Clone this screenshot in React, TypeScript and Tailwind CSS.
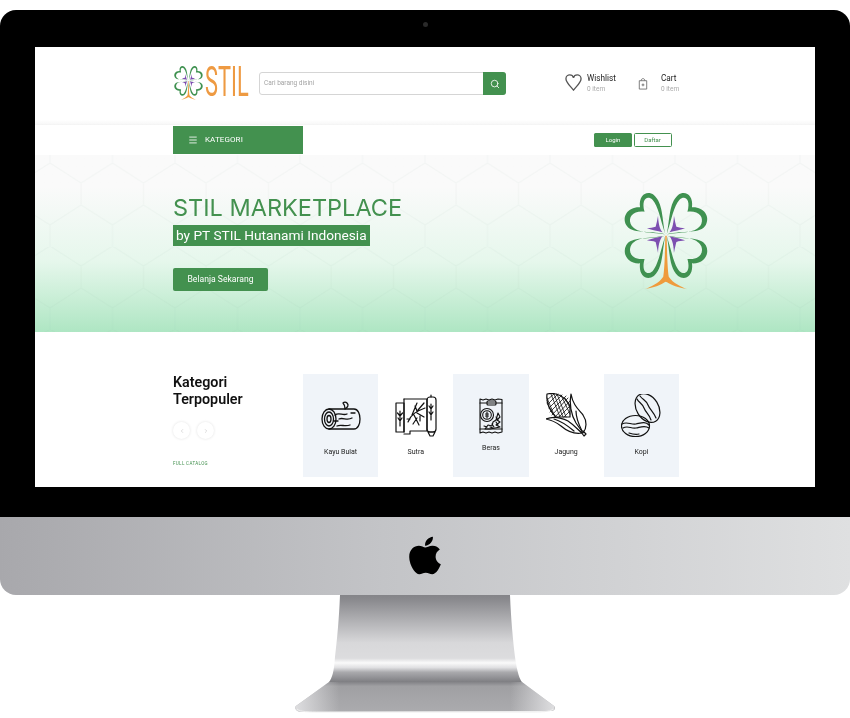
import React from "react";
import { FaApple } from "react-icons/fa";
import { Search, Menu, ChevronLeft, ChevronRight } from "lucide-react";

const Heart = ({ t }: { t: string }) => (
  <path
    transform={t}
    fill="#3f9150"
    d="M198 178 C188 130 192 85 165 60 C145 45 120 60 125 97 C90 95 72 125 85 150 C100 178 150 165 198 178 C150 170 112 176 98 147 C90 125 106 106 138 110 C128 73 145 60 161 74 C178 94 183 130 198 178Z"
  />
);
const Star = ({ t }: { t: string }) => (
  <path
    transform={t}
    fill="#7d4fb0"
    d="M190 172 C180 160 178 140 177 122 C174 138 172 148 170 155 C162 158 155 158 145 160 C160 165 175 168 190 172Z"
  />
);

const Clover = ({ className }: { className: string }) => (
  <svg viewBox="70 45 260 300" preserveAspectRatio="none" className={className}>
    <Heart t="" />
    <Heart t="translate(400 0) scale(-1 1)" />
    <Heart t="translate(0 356) scale(1 -1) translate(0 -8) scale(1 1.02)" />
    <Heart t="translate(400 356) scale(-1 -1) translate(0 -8) scale(1 1.02)" />
    <Star t="" />
    <Star t="translate(400 0) scale(-1 1)" />
    <Star t="translate(0 356) scale(1 -1)" />
    <Star t="translate(400 356) scale(-1 -1)" />
    <path
      fill="#ef9b3c"
      d="M198 182 L202 182 C203 230 204 280 208 305 C220 325 245 335 262 343 C235 338 215 330 203 322 C200 320 199 320 196 322 C185 330 165 338 138 343 C155 335 180 325 192 305 C196 280 197 230 198 182Z"
    />
  </svg>
);

const LogIcon = () => (
  <svg viewBox="0 0 40 30" className="h-[30px] w-[40px]" fill="none" stroke="#111" strokeWidth="1.3" strokeLinecap="round" strokeLinejoin="round">
    <ellipse cx="8" cy="18" rx="7" ry="10" />
    <ellipse cx="8" cy="18" rx="4.5" ry="7" />
    <ellipse cx="8" cy="18" rx="2" ry="3.5" />
    <path d="M8 8 H33 C41 8 41 28 33 28 H8" />
    <path d="M14 14 C18 11 22 15 26 13 M18 18 C22 16 26 20 31 17 M16 25 C20 23 24 26 29 24 M13 20 H17 M30 12 H34" />
    <path d="M24 8 C24 5 24 4 22 2 M24 8 C27 6 28 4 26 2 C25 1 23 1 22 2" />
  </svg>
);
const SutraIcon = () => (
  <svg viewBox="0 0 42 44" className="h-[44px] w-[42px]" fill="none" stroke="#111" strokeWidth="1.2" strokeLinecap="round" strokeLinejoin="round">
    <path d="M1 9 H9 V38 H1 Z" />
    <path d="M9 5 H32 V37 H15 V40 H9" />
    <path d="M9 5 V38" />
    <rect x="32" y="3" width="9" height="35" rx="3" />
    <path d="M36 1 V3 M33 38 H40 L38 42 H35 Z" />
    <path d="M5 17 V32 M5 22 L2.5 19 M5 22 L7.5 19 M5 27 L3 24 M5 27 L7 24" />
    <path d="M36 10 V26 M36 15 L34 12 M36 15 L38 12 M36 21 L34 18 M36 21 L38 18" />
    <path d="M13 28 C16 20 22 17 30 14 M17 21 L22 9 M22 17 L20 12 M23 16 L29 9 M22 19 L29 23 M19 21 L24 31 M22 24 L18 30 M15 25 H12 M25 22 L25 27" />
  </svg>
);
const RiceIcon = () => (
  <svg viewBox="0 0 26 36" className="h-[36px] w-[26px]" fill="none" stroke="#111" strokeWidth="1.1" strokeLinecap="round" strokeLinejoin="round">
    <path d="M2 1 L5 2 L8 1 L11 2 L14 1 L17 2 L20 1 L24 1.5 V34 L20 35 L17 34 L14 35 L11 34 L8 35 L5 34 L2 35 Z" />
    <path d="M2 5 H24 M2 31 H24" strokeWidth="1.2" />
    <rect x="9" y="3" width="9" height="4" rx="1" />
    <circle cx="9" cy="17" r="6.5" />
    <circle cx="9" cy="17" r="4.3" />
    <path d="M9 14 V20 M7.5 16 H10.5 M7.5 18 H10.5" />
    <path d="M20 15 L22 19 L19 22 L22 24 L18 27 L22 29 L12 31 L7 31 L10 27 L14 28 L15 24 L18 22 Z" />
    <path d="M6 28 L9 29 M14 26 L16 29 M18 24 L20 27 M18 19 L20 22 M12 29 L15 30" />
  </svg>
);
const CornIcon = () => (
  <svg viewBox="0 0 41 44" className="h-[44px] w-[41px]" fill="none" stroke="#111" strokeWidth="1.2" strokeLinecap="round" strokeLinejoin="round">
    <path d="M1 1 C10 -1 19 3 24 13 L24 24 L10 24 C4 18 0 10 1 1 Z" />
    <path
      d="M5 1 L14 24 M8 1 L17 24 M11 1 L20 24 M15 2 L24 21 M19 5 L24 15 M1 5 L9 24 M1 10 L7 21 M24 8 L9 24 M22 5 L6 22 M20 3 L4 19 M16 2 L3 15 M12 1 L2 11 M8 1 L1 7 M24 13 L13 24 M24 18 L18 24"
      strokeWidth="0.8"
    />
    <path d="M0 26 C7 23 14 24 22 28 C28 32 32 37 36 40 C30 41 22 39 15 33 C11 30 6 27 0 26 Z" />
    <path d="M8 26 C15 28 22 33 28 38" />
    <path d="M25 1 C23 10 25 22 30 30 C34 36 36 38 37 40 C41 35 41 28 37 22 C32 16 27 12 25 1 Z" />
    <path d="M30 18 C30 25 33 32 36 38 M35 39 L38 43 L40 41 L37 38" />
  </svg>
);
const CoffeeIcon = () => (
  <svg viewBox="0 0 41 44" className="h-[44px] w-[41px]" fill="none" stroke="#111" strokeWidth="1.2" strokeLinecap="round" strokeLinejoin="round">
    <ellipse cx="26.5" cy="14" rx="11" ry="15.5" transform="rotate(-32 26.5 14)" />
    <path d="M19 2 C22 6 25 6 27 11 C29 16 32 17 35 24 M16 5 C18 9 21 9 23 14 C25 19 28 20 30 26" />
    <ellipse cx="14.5" cy="32" rx="14" ry="10.5" />
    <path d="M1 30 C6 27 10 31 15 30 C20 29 24 27 28 31 M2 34 C7 31 10 35 15 34 C20 33 24 31 28 34" />
    <path d="M8 39 C11 40 14 41 18 40" />
  </svg>
);

const cats = [
  { name: "Kayu Bulat", shaded: true, icon: <LogIcon />, box: "pt-[27px]", label: "mt-[16px]" },
  { name: "Sutra", shaded: false, icon: <SutraIcon />, box: "pt-[20px]", label: "mt-[9px]" },
  { name: "Beras", shaded: true, icon: <RiceIcon />, box: "pt-[24px]", label: "mt-[9px]" },
  { name: "Jagung", shaded: false, icon: <CornIcon />, box: "pt-[19px]", label: "mt-[10px]" },
  { name: "Kopi", shaded: true, icon: <CoffeeIcon />, box: "pt-[20px]", label: "mt-[9px]" },
];

const Category = ({ c }: { c: (typeof cats)[number] }) => (
  <div className={`flex h-[103px] w-[75.2px] flex-col items-center ${c.box} ${c.shaded ? "bg-[#f0f4f9]" : "bg-white"}`}>
    {c.icon}
    <div className={`text-[7px] leading-[10px] text-[#222] ${c.label}`}>{c.name}</div>
  </div>
);

const HexPattern = () => (
  <svg className="absolute inset-0 h-full w-full" fill="none">
    <defs>
      <pattern id="hex" width="62.5" height="83" patternUnits="userSpaceOnUse" x="15" y="8">
        <path d="M0 0 L31 20 L62.5 0 M31 20 V42 M31 42 L0 62 M31 42 L62.5 62 M0 62 V83 M62.5 62 V83" stroke="#7fa893" strokeOpacity="0.05" strokeWidth="1.2" />
      </pattern>
    </defs>
    <rect width="100%" height="100%" fill="url(#hex)" />
  </svg>
);

export default function App() {
  return (
    <div className="flex h-[718px] w-[850px] flex-col overflow-hidden bg-white pt-[10px] font-['Roboto',sans-serif]">
      {/* bezel */}
      <div className="flex flex-col items-center rounded-t-[16px] bg-black px-[35px] pb-[30px] pt-[12px]">
        <div className="mb-[20px] h-[5px] w-[5px] rounded-full bg-[#2a2a2a]" />
        <div className="h-[440px] w-[780px] overflow-hidden bg-white blur-[0.35px]">
          {/* header */}
          <div className="flex h-[73px] bg-white pl-[138px] pt-[18px]">
            <div className="flex h-[35px] w-[86px] shrink-0 items-start">
              <Clover className="h-[35px] w-[31px] shrink-0" />
              <span className="ml-[1px] mt-[-8px] origin-left scale-x-[0.52] text-[42px] leading-[50px] font-normal text-[#ee9a42]">STIL</span>
            </div>
            <div className="mt-[7px] flex h-[23px] w-[247px] rounded-[3px] border border-[#d5d5d5] bg-white">
              <div className="flex-1 pl-[4px] text-[6.5px] leading-[21px] text-[#a3a3a3]">Cari barang disini</div>
              <div className="m-[-1px] flex h-[23px] w-[23px] items-center justify-center rounded-r-[3px] bg-[#43914f]">
                <Search className="h-[10px] w-[10px] text-white" strokeWidth={2} />
              </div>
            </div>
            <div className="ml-[59px] mt-[7px] flex">
              <svg viewBox="0 0 18 18" className="mr-[5px] mt-[2px] h-[17px] w-[17px]" fill="none" stroke="#555" strokeWidth="1.4">
                <path d="M9 17 C5 12 1 9 1 5 C1 2 3.5 1 5 1 C7 1 8.5 2 9 4 C9.5 2 11 1 13 1 C15 1 17 2.5 17 5 C17 9 13 12 9 17 Z" />
              </svg>
              <div className="w-[30px]">
                <div className="text-[8.2px] leading-[12px] text-[#222]">Wishlist</div>
                <div className="text-[6.5px] leading-[10px] text-[#aaa]">0 item</div>
              </div>
              <svg viewBox="0 0 10 14" className="ml-[21px] mr-[13px] mt-[5px] h-[13px] w-[10px]" fill="none" stroke="#666" strokeWidth="0.9">
                <path d="M1 4 H9 V13 H1 Z M3 4 C3 1 7 1 7 4 M5 7 V10 M3.5 8.5 H6.5" />
              </svg>
              <div>
                <div className="text-[8.2px] leading-[12px] text-[#222]">Cart</div>
                <div className="text-[6.5px] leading-[10px] text-[#aaa]">0 item</div>
              </div>
            </div>
          </div>
          {/* nav */}
          <div className="h-[5px] bg-gradient-to-b from-white to-[#f6f6f6]" />
          <div className="relative flex h-[30px] items-start bg-white pl-[138px] pt-[1px] shadow-[0_2px_4px_rgba(0,0,0,0.08)]">
            <div className="flex h-[28px] w-[130px] items-center bg-[#43914f] pl-[15px]">
              <Menu className="h-[10px] w-[10px] text-white" strokeWidth={2} />
              <span className="ml-[7px] text-[8px] tracking-[0.1px] text-white">KATEGORI</span>
            </div>
            <div className="ml-[291px] mt-[6.5px] flex h-[14.5px] gap-[1.5px]">
              <div className="flex w-[38px] items-center justify-center rounded-[1.5px] bg-[#43914f] text-[6px] text-white">Login</div>
              <div className="flex w-[38px] items-center justify-center rounded-[1.5px] border border-[#43914f] bg-white text-[6px] text-[#43914f]">Daftar</div>
            </div>
          </div>
          {/* hero */}
          <div className="relative flex h-[177px] bg-gradient-to-b from-[#fafafa] from-[18%] via-[#e6f7ec] via-[60%] to-[#aee6c3] pl-[138px]">
            <HexPattern />
            <div className="relative flex w-[230px] shrink-0 flex-col items-start pt-[39px]">
              <div className="whitespace-nowrap font-['Inter',sans-serif] text-[23.5px] leading-[28px] font-normal text-[#43914f]">STIL MARKETPLACE</div>
              <div className="mt-[3px] flex h-[21px] w-[197px] items-center whitespace-nowrap bg-[#43914f] pl-[3px] text-[13.7px] text-white">by PT STIL Hutanami Indonesia</div>
              <div className="mt-[22px] flex h-[23px] w-[95px] items-center justify-center rounded-[2px] bg-[#43914f] text-[8.6px] text-white">Belanja Sekarang</div>
            </div>
            <Clover className="relative ml-[218px] mt-[35px] h-[100px] w-[90px]" />
          </div>
          {/* categories */}
          <div className="flex pl-[138px] pt-[42px]">
            <div className="w-[130px]">
              <div className="text-[14.3px] leading-[17px] font-semibold text-[#111]">
                Kategori
                <br />
                Terpopuler
              </div>
              <div className="mt-[14px] flex gap-[7px]">
                <div className="flex h-[17px] w-[17px] items-center justify-center rounded-full bg-white shadow-[0_0_3px_rgba(0,0,0,0.12)]">
                  <ChevronLeft className="h-[6px] w-[6px] text-[#bbb]" />
                </div>
                <div className="flex h-[17px] w-[17px] items-center justify-center rounded-full bg-white shadow-[0_0_3px_rgba(0,0,0,0.12)]">
                  <ChevronRight className="h-[6px] w-[6px] text-[#bbb]" />
                </div>
              </div>
              <div className="mt-[22px] text-[4.5px] tracking-[0.35px] text-[#43914f]">FULL CATALOG</div>
            </div>
            <div className="flex">
              {cats.map((c) => (
                <Category key={c.name} c={c} />
              ))}
            </div>
          </div>
        </div>
      </div>
      {/* chin */}
      <div className="flex h-[78px] items-center justify-center rounded-b-[16px] bg-gradient-to-r from-[#a8a8ac] via-[#c3c4c7] via-[45%] to-[#dfe0e1] blur-[0.3px]">
        <FaApple className="mb-[2px] h-[43px] w-[40px] text-black" />
      </div>
      {/* stand */}
      <svg viewBox="295 595 260 118" className="mx-auto h-[118px] w-[260px]">
        <defs>
          <linearGradient id="neck" x1="0" y1="0" x2="0" y2="1">
            <stop offset="0" stopColor="#848488" />
            <stop offset="0.05" stopColor="#8c8c90" />
            <stop offset="0.24" stopColor="#b5b5b8" />
            <stop offset="0.41" stopColor="#d8d8da" />
            <stop offset="0.54" stopColor="#dcdcde" />
            <stop offset="0.58" stopColor="#fafafa" />
            <stop offset="0.62" stopColor="#e0e0e2" />
            <stop offset="0.66" stopColor="#aaaaad" />
            <stop offset="0.74" stopColor="#808084" />
            <stop offset="0.78" stopColor="#a0a0a3" />
            <stop offset="1" stopColor="#ababae" />
          </linearGradient>
          <linearGradient id="side" x1="0" y1="0" x2="1" y2="0">
            <stop offset="0" stopColor="#dedee0" />
            <stop offset="0.17" stopColor="#dedee0" stopOpacity="0" />
            <stop offset="0.83" stopColor="#dedee0" stopOpacity="0" />
            <stop offset="1" stopColor="#dedee0" />
          </linearGradient>
        </defs>
        <path
          d="M340 595 H510 C511 620 513 640 515 657 C517 672 520 680 522 682 L554 706 C556 708 555 710 552 711 L320 712 H300 C296 711 294 708 296 706 L329 682 C332 678 334 672 335 657 C337 640 339 620 340 595 Z"
          fill="url(#neck)"
        />
        <path d="M296 706 L329 682 L522 682 L554 706 C555 708 555 710 552 711 L300 712 C296 711 294 708 296 706 Z" fill="url(#side)" />
        <path d="M297 709 C300 712 310 712 320 712 H530 C540 712 550 712 553 709" stroke="#eee" fill="none" strokeWidth="1" />
      </svg>
    </div>
  );
}
